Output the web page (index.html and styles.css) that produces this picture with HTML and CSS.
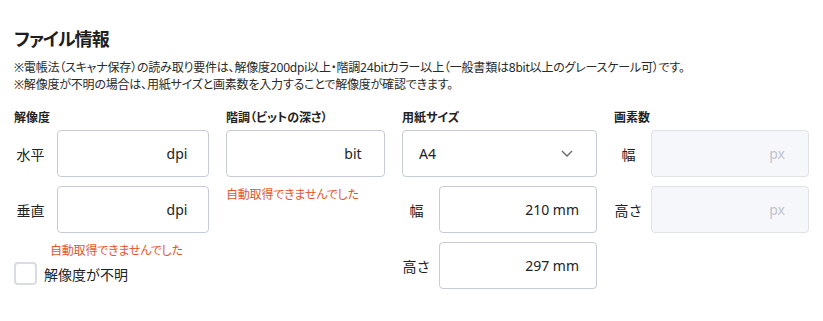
FILE: index.html
```html
<!DOCTYPE html>
<html lang="ja">
<head>
<meta charset="utf-8">
<title>ファイル情報</title>
<link rel="stylesheet" href="styles.css">
</head>
<body>
<div class="page">
  <h2 class="title">ファイル情報</h2>
  <div class="notes">
    <p>※電帳法（スキャナ保存）の読み取り要件は、解像度200dpi以上・階調24bitカラー以上（一般書類は8bit以上のグレースケール可）です。</p>
    <p>※解像度が不明の場合は、用紙サイズと画素数を入力することで解像度が確認できます。</p>
  </div>
  <div class="grid">
    <div class="col">
      <div class="col-label">解像度</div>
      <div class="row row-wide">
        <span class="row-label">水平</span>
        <div class="field"><span class="unit">dpi</span></div>
      </div>
      <div class="row row-wide">
        <span class="row-label">垂直</span>
        <div class="field"><span class="unit">dpi</span></div>
      </div>
      <div class="error error-indent">自動取得できませんでした</div>
      <label class="check">
        <span class="box"></span>
        <span>解像度が不明</span>
      </label>
    </div>
    <div class="col">
      <div class="col-label">階調（ビットの深さ）</div>
      <div class="field"><span class="unit">bit</span></div>
      <div class="error">自動取得できませんでした</div>
    </div>
    <div class="col">
      <div class="col-label">用紙サイズ</div>
      <div class="select">
        <span>A4</span>
        <svg class="chevron" width="12" height="7" viewBox="0 0 12 7"><path d="M1 1 L6 6 L11 1" fill="none" stroke="#666" stroke-width="1.3"/></svg>
      </div>
      <div class="row">
        <span class="row-label">幅</span>
        <div class="field"><span class="value">210 mm</span></div>
      </div>
      <div class="row">
        <span class="row-label">高さ</span>
        <div class="field"><span class="value">297 mm</span></div>
      </div>
    </div>
    <div class="col">
      <div class="col-label">画素数</div>
      <div class="row">
        <span class="row-label">幅</span>
        <div class="field disabled"><span class="unit">px</span></div>
      </div>
      <div class="row">
        <span class="row-label">高さ</span>
        <div class="field disabled"><span class="unit">px</span></div>
      </div>
    </div>
  </div>
</div>
</body>
</html>
```

FILE: styles.css
```css
* { box-sizing: border-box; }
body {
  margin: 0;
  background: #fff;
  color: #222;
  font-family: "Noto Sans", "Noto Sans CJK JP", sans-serif;
}
.page { padding: 26px 14px 0 14px; }
.title {
  margin: 0;
  font-size: 18px;
  line-height: 27px;
  font-weight: 700;
  color: #1e1e1e;
  font-feature-settings: "palt";
  letter-spacing: -0.9px;
}
.notes { margin-top: 6px; }
.notes p {
  margin: 0;
  font-size: 12px;
  line-height: 17px;
  color: #2a2a2a;
  font-feature-settings: "palt";
  letter-spacing: -0.2px;
}
.grid {
  margin-top: 16px;
  display: grid;
  grid-template-columns: 195px 159px 195px 195px;
  column-gap: 17px;
  align-items: start;
}
.col { display: flex; flex-direction: column; }
.col-label {
  font-size: 12px;
  line-height: 17px;
  font-weight: 700;
  margin-bottom: 4px;
  font-feature-settings: "palt";
}
.row {
  display: flex;
  align-items: center;
  margin-bottom: 9px;
}
.row-label {
  width: 29px;
  margin-right: 8px;
  text-align: center;
  font-size: 14px;
  flex: none;
}
.row-wide .row-label { width: 33px; margin-right: 10px; }
.row .field { flex: 1; }
.field {
  height: 47px;
  border: 1px solid #c6ccd5;
  border-radius: 4px;
  background: #fff;
  display: flex;
  align-items: center;
  justify-content: flex-end;
  padding-right: 16px;
  font-size: 14px;
}
.col > .field { margin-bottom: 9px; }
.unit { width: 30px; text-align: center; color: #222; }
.value { padding-right: 1px; }
.field.disabled {
  background: #f6f7fb;
  border-color: #dfe2e8;
}
.field.disabled .unit { color: #bfc3ca; }
.select {
  height: 47px;
  border: 1px solid #c6ccd5;
  border-radius: 4px;
  display: flex;
  align-items: center;
  justify-content: space-between;
  padding: 0 23px 0 16px;
  font-size: 14px;
  margin-bottom: 9px;
}
.chevron { display: block; }
.error {
  font-size: 12px;
  line-height: 17px;
  color: #e2572a;
  font-feature-settings: "palt";
  letter-spacing: -0.2px;
}
.error-indent { padding-left: 36px; }
.check {
  display: flex;
  align-items: center;
  gap: 7px;
  margin-top: 3px;
  font-size: 14px;
}
.box {
  width: 23px;
  height: 23px;
  border: 2px solid #d8dce3;
  border-radius: 4px;
  background: #fff;
}
```
